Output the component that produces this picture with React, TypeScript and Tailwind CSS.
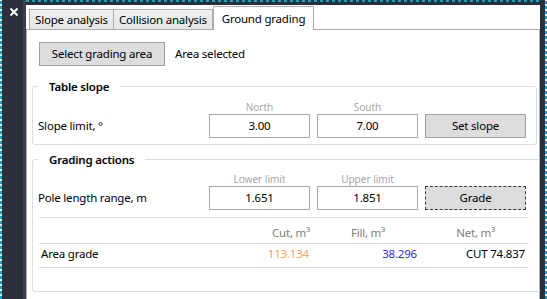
export default function App() {
  return (
    <div className="flex h-[299px] w-[547px] overflow-hidden bg-[#2b303a] font-['Noto_Sans',sans-serif] text-[11.5px] leading-none tracking-[-0.2px] text-black">
      {/* Left strip */}
      <div className="flex h-full w-[26px] shrink-0">
        <div className="h-full w-[2px] bg-[repeating-linear-gradient(0deg,#1e9fbf_0px,#1e9fbf_3px,#e6f4f8_3px,#e6f4f8_5px)]" />
        <div className="h-full w-[21px] pl-[8px] pt-[8px]">
          <svg width="8" height="8" viewBox="0 0 8 8">
            <path d="M0.5 0.5L7.5 7.5M7.5 0.5L0.5 7.5" stroke="#ffffff" strokeWidth="2" />
          </svg>
        </div>
        <div className="h-full w-[3px] bg-[#3a404b]" />
      </div>

      {/* Main */}
      <div className="flex w-[514px] shrink-0 flex-col">
        <div className="h-[5px] w-full bg-[#2b303a]">
          <div className="h-[2px] w-full bg-[repeating-linear-gradient(90deg,#1e9fbf_0px,#1e9fbf_3px,#2b303a_3px,#2b303a_6px)]" />
        </div>
        <div className="flex flex-1 flex-col bg-white">
          {/* Tabs */}
          <div className="flex h-[24px] items-end pl-[3px]">
            <div className="flex h-[20px] w-[85px] items-center justify-center border border-b-0 border-[#acacac] bg-[linear-gradient(#f0f0f0,#e5e5e5)]">
              Slope analysis
            </div>
            <div className="flex h-[20px] w-[99px] items-center justify-center border border-b-0 border-l-0 border-[#acacac] bg-[linear-gradient(#f0f0f0,#e5e5e5)]">
              Collision analysis
            </div>
            <div className="relative z-10 -mb-px flex h-[24px] w-[101px] items-center justify-center border border-b-0 border-[#acacac] bg-white">
              Ground grading
            </div>
          </div>

          {/* Content */}
          <div className="flex flex-1 flex-col border-l border-r border-t border-[#acacac] pl-[5px] pr-[2px] pt-[12px]">
            <div className="flex items-center">
              <button className="ml-[7px] h-[24px] w-[126px] border border-[#a0a0a0] bg-[#dddddd]">
                Select grading area
              </button>
              <span className="ml-[10px]">Area selected</span>
            </div>

            <fieldset className="mt-[12px] rounded-[3px] border border-[#d5dfe5] px-[5px] pb-[6px]">
              <legend className="pl-[11px] pr-[11px] font-semibold leading-[17px]">Table slope</legend>
              <div className="mt-[6px] grid grid-cols-[164px_101px_101px_101px] gap-x-[7px]">
                <div />
                <div className="text-center text-[10px] leading-[12px] tracking-normal text-[#a8a8a8]">North</div>
                <div className="text-center text-[10px] leading-[12px] tracking-normal text-[#a8a8a8]">South</div>
                <div />
                <div className="mt-[1px] flex h-[24px] items-center">Slope limit, °</div>
                <div className="mt-[1px] flex h-[24px] items-center justify-center border border-[#a9a9a9]">3.00</div>
                <div className="mt-[1px] flex h-[24px] items-center justify-center border border-[#a9a9a9]">7.00</div>
                <button className="mt-[1px] h-[24px] border border-[#a0a0a0] bg-[#dddddd]">Set slope</button>
              </div>
            </fieldset>

            <fieldset className="mt-[6px] flex-1 rounded-[3px] border border-[#d5dfe5] px-[5px]">
              <legend className="pl-[11px] pr-[11px] font-semibold leading-[17px]">Grading actions</legend>
              <div className="mt-[5px] grid grid-cols-[164px_101px_101px_101px] gap-x-[7px]">
                <div />
                <div className="text-center text-[10px] leading-[12px] tracking-normal text-[#a8a8a8]">Lower limit</div>
                <div className="text-center text-[10px] leading-[12px] tracking-normal text-[#a8a8a8]">Upper limit</div>
                <div />
                <div className="mt-[1px] flex h-[24px] items-center">Pole length range, m</div>
                <div className="mt-[1px] flex h-[24px] items-center justify-center border border-[#a9a9a9]">1.651</div>
                <div className="mt-[1px] flex h-[24px] items-center justify-center border border-[#a9a9a9]">1.851</div>
                <button className="mt-[1px] h-[24px] border border-dashed border-[#3c3c3c] bg-[#dddddd]">Grade</button>
              </div>

              <div className="ml-[1px] mr-[6px] mt-[7px] border-t border-[#dedede]">
                <div className="grid h-[26px] grid-cols-[170px_108px_108px_104px] items-center border-b border-[#dedede] pt-[5px] text-[#808080]">
                  <div />
                  <div className="pr-[7px] text-right">Cut, m³</div>
                  <div className="pr-[40px] text-right">Fill, m³</div>
                  <div className="pr-[34px] text-right">Net, m³</div>
                </div>
                <div className="grid h-[24px] grid-cols-[170px_108px_108px_104px] items-center border-b border-[#dedede] pb-[3px]">
                  <div className="pl-[2px]">Area grade</div>
                  <div className="pr-[8px] text-right text-[#f5a35a]">113.134</div>
                  <div className="pr-[8px] text-right text-[#2a2aff]">38.296</div>
                  <div className="pr-[4px] text-right">CUT 74.837</div>
                </div>
              </div>
            </fieldset>
            <div className="h-[7px]" />
          </div>
        </div>
      </div>

      {/* Right strip */}
      <div className="flex h-full w-[7px] shrink-0">
        <div className="h-full w-[5px] bg-[#2b303a]" />
        <div className="h-full w-[2px] bg-[repeating-linear-gradient(0deg,#1e9fbf_0px,#1e9fbf_3px,#e6f4f8_3px,#e6f4f8_5px)]" />
      </div>
    </div>
  )
}
